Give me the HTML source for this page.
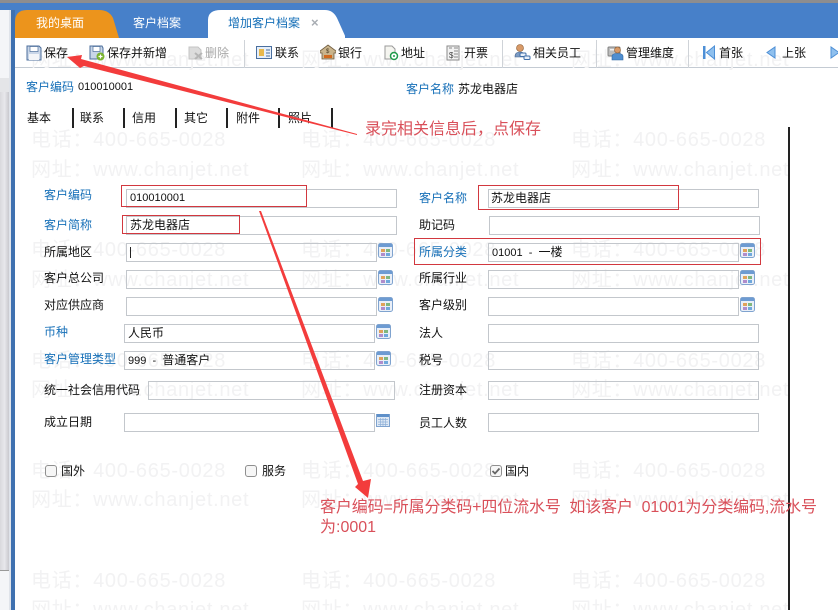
<!DOCTYPE html>
<html><head><meta charset="utf-8"><style>
html,body{margin:0;padding:0;background:#fff}
#p{position:relative;width:838px;height:610px;overflow:hidden;background:#fff;font:12px/16px "Liberation Sans","Noto Sans CJK SC",sans-serif;color:#111}
#p div,#p span.a,#p svg.a{position:absolute}
.t{white-space:nowrap}
.b{color:#1770b8}
.i{border:1px solid #c3c7cc;box-sizing:border-box;height:19px;background:transparent}
.w{color:#f2f2f3;font-size:20px;line-height:24px;white-space:nowrap;letter-spacing:.7px}
.s{width:1px;height:28px;top:40px;background:#cfd3d8}
.sep{width:2px;height:20px;top:108px;background:#222}
.r{border:1px solid #d2383f;box-sizing:border-box}
.c{width:12px;height:12px;border:1px solid #8f8f8f;border-radius:3px;box-sizing:border-box;background:#f6f6f6}
.n{color:#d9505a;font-size:16px;line-height:20px;white-space:nowrap}
</style></head><body><div id="p">

<div class="w" style="left:31px;top:18px">电话：400-665-0028</div><div class="w" style="left:301px;top:18px">电话：400-665-0028</div><div class="w" style="left:571px;top:18px">电话：400-665-0028</div>
<div style="left:0;top:0;width:838px;height:3px;background:#8d8d8f"></div>
<div style="left:0;top:3px;width:838px;height:35px;background:#4780c9"></div>
<div style="left:0;top:10px;width:11px;height:600px;background:#f4f5f8"></div>
<div style="left:0;top:78px;width:9px;height:14px;background:#e4e5e8"></div>
<div style="left:0;top:92px;width:9px;height:478px;background:linear-gradient(90deg,#d8d8dc,#e8e8ec,#c9c9ce)"></div>
<div style="left:0;top:570px;width:9px;height:1px;background:#999"></div>
<div style="left:9px;top:10px;width:2px;height:600px;background:#dfe3ea"></div>
<div style="left:11px;top:10px;width:4px;height:600px;background:#3f71b0"></div>

<svg class="a" style="left:15px;top:10px" width="330" height="28"><path d="M0 28V12Q0 0 12 0H84Q94 0 98 8L104 28Z" fill="#ec941c"/><path d="M193 28Q193 28 193 10Q193 0 206 0H310Q318 0 322 8L331 28Z" fill="#fff"/></svg>
<div class="t" style="left:36px;top:14px;color:#fff;line-height:18px">我的桌面</div>
<div class="t" style="left:133px;top:14px;color:#fff;line-height:18px">客户档案</div>
<div class="t b" style="left:228px;top:14px;line-height:18px">增加客户档案</div>
<div class="t" style="left:311px;top:14px;color:#a8adb3;font-size:13px;line-height:18px;font-weight:bold">×</div>

<div style="left:15px;top:38px;width:823px;height:30px;background:#fff;border-bottom:1px solid #c4cbd3;box-sizing:border-box"></div>
<div class="w" style="left:31px;top:48px">网址：www.chanjet.net</div><div class="w" style="left:301px;top:48px">网址：www.chanjet.net</div><div class="w" style="left:571px;top:48px">网址：www.chanjet.net</div>
<div class="w" style="left:31px;top:128px">电话：400-665-0028</div><div class="w" style="left:301px;top:128px">电话：400-665-0028</div><div class="w" style="left:571px;top:128px">电话：400-665-0028</div>
<div class="w" style="left:31px;top:158px">网址：www.chanjet.net</div><div class="w" style="left:301px;top:158px">网址：www.chanjet.net</div><div class="w" style="left:571px;top:158px">网址：www.chanjet.net</div>
<div class="w" style="left:31px;top:238px">电话：400-665-0028</div><div class="w" style="left:301px;top:238px">电话：400-665-0028</div><div class="w" style="left:571px;top:238px">电话：400-665-0028</div>
<div class="w" style="left:31px;top:268px">网址：www.chanjet.net</div><div class="w" style="left:301px;top:268px">网址：www.chanjet.net</div><div class="w" style="left:571px;top:268px">网址：www.chanjet.net</div>
<div class="w" style="left:31px;top:349px">电话：400-665-0028</div><div class="w" style="left:301px;top:349px">电话：400-665-0028</div><div class="w" style="left:571px;top:349px">电话：400-665-0028</div>
<div class="w" style="left:31px;top:378px">网址：www.chanjet.net</div><div class="w" style="left:301px;top:378px">网址：www.chanjet.net</div><div class="w" style="left:571px;top:378px">网址：www.chanjet.net</div>
<div class="w" style="left:31px;top:459px">电话：400-665-0028</div><div class="w" style="left:301px;top:459px">电话：400-665-0028</div><div class="w" style="left:571px;top:459px">电话：400-665-0028</div>
<div class="w" style="left:31px;top:488px">网址：www.chanjet.net</div><div class="w" style="left:301px;top:488px">网址：www.chanjet.net</div><div class="w" style="left:571px;top:488px">网址：www.chanjet.net</div>
<div class="w" style="left:31px;top:569px">电话：400-665-0028</div><div class="w" style="left:301px;top:569px">电话：400-665-0028</div><div class="w" style="left:571px;top:569px">电话：400-665-0028</div>
<div class="w" style="left:31px;top:598px">网址：www.chanjet.net</div><div class="w" style="left:301px;top:598px">网址：www.chanjet.net</div><div class="w" style="left:571px;top:598px">网址：www.chanjet.net</div>

<!-- toolbar icons -->
<svg class="a" style="left:26px;top:45px" width="16" height="16"><path d="M1 1H13L15 3V15H1Z" fill="#c9d6e8" stroke="#4d6f9c"/><rect x="4" y="1.5" width="8" height="5" fill="#fff" stroke="#4d6f9c" stroke-width=".7"/><rect x="3" y="9" width="10" height="6" fill="#f3f5f8"/></svg>
<svg class="a" style="left:89px;top:45px" width="16" height="16"><path d="M1 1H13L14 3V14H1Z" fill="#c9d6e8" stroke="#4d6f9c"/><rect x="4" y="1.5" width="7" height="5" fill="#fff" stroke="#4d6f9c" stroke-width=".7"/><circle cx="11.5" cy="11.5" r="4" fill="#7ab32f"/><path d="M11.5 9.5v4M9.500 11.5h4" stroke="#fff" stroke-width="1.200"/></svg>
<svg class="a" style="left:188px;top:45px" width="16" height="16"><path d="M1 2H10L13 5V14H1Z" fill="#dcdcdc" stroke="#c4c4c4"/><path d="M7 8L14 14M14 8L7 14" stroke="#b5b5b5" stroke-width="2"/></svg>
<svg class="a" style="left:256px;top:45px" width="16" height="15"><rect x=".5" y="1.500" width="15" height="12" fill="#e6effa" stroke="#4a6f9f"/><rect x="3" y="4" width="5" height="7" fill="#e8b84c"/><path d="M10 5h4M10 8h4M10 11h4" stroke="#4a6f9f"/></svg>
<svg class="a" style="left:320px;top:44px" width="16" height="16"><path d="M0 7L8 1L16 7V9H14V15H2V9H0Z" fill="#c9b48c" stroke="#6e5a3c" stroke-width=".8"/><rect x="4" y="11" width="8" height="3" fill="#d2691e"/><text x="6" y="9" font-size="6" font-family="Liberation Sans" fill="#4a3a20">$</text></svg>
<svg class="a" style="left:383px;top:45px" width="16" height="16"><path d="M2 1H9L12 4V14H2Z" fill="#f5f5f0" stroke="#9a9a9a"/><circle cx="11" cy="11" r="3.500" fill="#fff" stroke="#1f9a4a" stroke-width="1.500"/><circle cx="11" cy="11" r="1" fill="#1f9a4a"/></svg>
<svg class="a" style="left:446px;top:45px" width="15" height="16"><path d="M1 1H13V15H1Z" fill="#f2f2f2" stroke="#8a8a8a"/><path d="M8 3h4M8 6h4M3 3h3" stroke="#8a8a8a"/><text x="3" y="13" font-size="8" font-family="Liberation Sans" fill="#444">$</text><path d="M8 9h4M8 12h4" stroke="#8a8a8a"/></svg>
<svg class="a" style="left:514px;top:44px" width="17" height="17"><circle cx="6" cy="4" r="3.500" fill="#d89a68" stroke="#8a5a30" stroke-width=".6"/><path d="M1 13Q1 8 6 8Q11 8 11 13Z" fill="#7d9cc4" stroke="#46648e" stroke-width=".6"/><rect x="6" y="9" width="6" height="3.500" rx="1" fill="#e8f0fa" stroke="#3f6ea8"/><rect x="10" y="12" width="6" height="3.500" rx="1" fill="#e8f0fa" stroke="#3f6ea8"/></svg>
<svg class="a" style="left:607px;top:45px" width="17" height="16"><rect x="1" y="2" width="12" height="9" rx="1" fill="#bdbdbd" stroke="#808080"/><rect x="3" y="4" width="8" height="1.500" fill="#f0f0f0"/><circle cx="10.500" cy="5" r="3" fill="#d89a68" stroke="#8a5a30" stroke-width=".6"/><path d="M5 15V11Q5 8.500 10.500 8.500Q16 8.500 16 11V15Z" fill="#4f8ed0" stroke="#2f64a0" stroke-width=".6"/></svg>
<svg class="a" style="left:703px;top:45px" width="12" height="15"><rect x="0" y="1" width="2.500" height="13" fill="#4d8fd6"/><path d="M11.500 1V14L3.500 7.500Z" fill="#8fc0ee" stroke="#4d8fd6"/></svg>
<svg class="a" style="left:766px;top:45px" width="10" height="15"><path d="M9 2V13L1 7.500Z" fill="#8fc0ee" stroke="#4d8fd6"/></svg>
<svg class="a" style="left:830px;top:45px" width="8" height="15"><path d="M1 2V13L9 7.500Z" fill="#8fc0ee" stroke="#4d8fd6"/></svg>

<div class="t" style="left:44px;top:45px">保存</div>
<div class="t" style="left:107px;top:45px">保存并新增</div>
<div class="t" style="left:205px;top:45px;color:#a9a9a9">删除</div>
<div class="t" style="left:275px;top:45px">联系</div>
<div class="t" style="left:338px;top:45px">银行</div>
<div class="t" style="left:401px;top:45px">地址</div>
<div class="t" style="left:464px;top:45px">开票</div>
<div class="t" style="left:533px;top:45px">相关员工</div>
<div class="t" style="left:626px;top:45px">管理维度</div>
<div class="t" style="left:719px;top:45px">首张</div>
<div class="t" style="left:782px;top:45px">上张</div>
<div class="s" style="left:244px"></div><div class="s" style="left:502px"></div><div class="s" style="left:596px"></div><div class="s" style="left:688px"></div>

<!-- header row -->
<div class="t b" style="left:26px;top:79px">客户编码</div><div class="t" style="left:78px;top:79px;font-size:11px">010010001</div>
<div class="t b" style="left:406px;top:81px">客户名称</div><div class="t" style="left:458px;top:81px">苏龙电器店</div>

<!-- inner tabs -->
<div class="t" style="left:27px;top:110px">基本</div><div class="t" style="left:80px;top:110px">联系</div><div class="t" style="left:132px;top:110px">信用</div><div class="t" style="left:184px;top:110px">其它</div><div class="t" style="left:236px;top:110px">附件</div><div class="t" style="left:288px;top:110px">照片</div>
<div class="sep" style="left:72px"></div><div class="sep" style="left:123px"></div><div class="sep" style="left:175px"></div><div class="sep" style="left:226px"></div><div class="sep" style="left:278px"></div><div class="sep" style="left:331px"></div>

<!-- left column -->
<div class="t b" style="left:44px;top:187px">客户编码</div><div class="i" style="left:126px;top:189px;width:271px"></div>
<div class="t" style="left:130px;top:190px;font-size:11px">010010001</div>
<div class="t b" style="left:44px;top:217px">客户简称</div><div class="i" style="left:126px;top:216px;width:271px"></div>
<div class="t" style="left:130px;top:217px">苏龙电器店</div>
<div class="t" style="left:44px;top:244px">所属地区</div><div class="i" style="left:126px;top:243px;width:251px"></div><div style="left:130px;top:247px;width:1px;height:11px;background:#222"></div>
<div class="t" style="left:44px;top:270px">客户总公司</div><div class="i" style="left:126px;top:270px;width:251px"></div>
<div class="t" style="left:44px;top:297px">对应供应商</div><div class="i" style="left:126px;top:297px;width:251px"></div>
<div class="t b" style="left:44px;top:324px">币种</div><div class="i" style="left:124px;top:324px;width:251px"></div>
<div class="t" style="left:128px;top:325px">人民币</div>
<div class="t b" style="left:44px;top:351px">客户管理类型</div><div class="i" style="left:124px;top:351px;width:251px"></div>
<div class="t" style="left:128px;top:352px;font-size:11px">999 &nbsp;-&nbsp; <span style="font-size:12px">普通客户</span></div>
<div class="t" style="left:44px;top:382px">统一社会信用代码</div><div class="i" style="left:148px;top:381px;width:247px"></div>
<div class="t" style="left:44px;top:414px">成立日期</div><div class="i" style="left:124px;top:413px;width:251px"></div>

<!-- right column -->
<div class="t b" style="left:419px;top:190px">客户名称</div><div class="i" style="left:488px;top:189px;width:271px"></div>
<div class="t" style="left:491px;top:190px">苏龙电器店</div>
<div class="t" style="left:419px;top:217px">助记码</div><div class="i" style="left:489px;top:216px;width:271px"></div>
<div class="t b" style="left:419px;top:244px">所属分类</div><div class="i" style="left:488px;top:243px;width:251px"></div>
<div class="t" style="left:492px;top:244px;font-size:11px">01001 &nbsp;-&nbsp; <span style="font-size:12px">一楼</span></div>
<div class="t" style="left:419px;top:270px">所属行业</div><div class="i" style="left:488px;top:270px;width:251px"></div>
<div class="t" style="left:419px;top:297px">客户级别</div><div class="i" style="left:488px;top:297px;width:251px"></div>
<div class="t" style="left:419px;top:325px">法人</div><div class="i" style="left:488px;top:324px;width:271px"></div>
<div class="t" style="left:419px;top:352px">税号</div><div class="i" style="left:488px;top:351px;width:271px"></div>
<div class="t" style="left:419px;top:382px">注册资本</div><div class="i" style="left:488px;top:381px;width:271px"></div>
<div class="t" style="left:419px;top:415px">员工人数</div><div class="i" style="left:488px;top:413px;width:271px"></div>

<!-- lookup icons -->
<svg class="a" style="left:378px;top:243px" width="15" height="15"><rect x=".5" y=".5" width="14" height="14" rx="2" fill="#e9eff8" stroke="#7fa3cf"/><rect x="1" y="1" width="13" height="3" fill="#6d9bd2"/><rect x="3" y="6" width="4" height="3" fill="#e0a25a"/><rect x="8" y="6" width="4" height="3" fill="#7fb77e"/><rect x="3" y="10" width="4" height="3" fill="#b08ccb"/><rect x="8" y="10" width="4" height="3" fill="#6fa8dc"/></svg>
<svg class="a" style="left:378px;top:270px" width="15" height="15"><rect x=".5" y=".5" width="14" height="14" rx="2" fill="#e9eff8" stroke="#7fa3cf"/><rect x="1" y="1" width="13" height="3" fill="#6d9bd2"/><rect x="3" y="6" width="4" height="3" fill="#e0a25a"/><rect x="8" y="6" width="4" height="3" fill="#7fb77e"/><rect x="3" y="10" width="4" height="3" fill="#b08ccb"/><rect x="8" y="10" width="4" height="3" fill="#6fa8dc"/></svg>
<svg class="a" style="left:378px;top:297px" width="15" height="15"><rect x=".5" y=".5" width="14" height="14" rx="2" fill="#e9eff8" stroke="#7fa3cf"/><rect x="1" y="1" width="13" height="3" fill="#6d9bd2"/><rect x="3" y="6" width="4" height="3" fill="#e0a25a"/><rect x="8" y="6" width="4" height="3" fill="#7fb77e"/><rect x="3" y="10" width="4" height="3" fill="#b08ccb"/><rect x="8" y="10" width="4" height="3" fill="#6fa8dc"/></svg>
<svg class="a" style="left:376px;top:324px" width="15" height="15"><rect x=".5" y=".5" width="14" height="14" rx="2" fill="#e9eff8" stroke="#7fa3cf"/><rect x="1" y="1" width="13" height="3" fill="#6d9bd2"/><rect x="3" y="6" width="4" height="3" fill="#e0a25a"/><rect x="8" y="6" width="4" height="3" fill="#7fb77e"/><rect x="3" y="10" width="4" height="3" fill="#b08ccb"/><rect x="8" y="10" width="4" height="3" fill="#6fa8dc"/></svg>
<svg class="a" style="left:376px;top:351px" width="15" height="15"><rect x=".5" y=".5" width="14" height="14" rx="2" fill="#e9eff8" stroke="#7fa3cf"/><rect x="1" y="1" width="13" height="3" fill="#6d9bd2"/><rect x="3" y="6" width="4" height="3" fill="#e0a25a"/><rect x="8" y="6" width="4" height="3" fill="#7fb77e"/><rect x="3" y="10" width="4" height="3" fill="#b08ccb"/><rect x="8" y="10" width="4" height="3" fill="#6fa8dc"/></svg>
<svg class="a" style="left:740px;top:243px" width="15" height="15"><rect x=".5" y=".5" width="14" height="14" rx="2" fill="#e9eff8" stroke="#7fa3cf"/><rect x="1" y="1" width="13" height="3" fill="#6d9bd2"/><rect x="3" y="6" width="4" height="3" fill="#e0a25a"/><rect x="8" y="6" width="4" height="3" fill="#7fb77e"/><rect x="3" y="10" width="4" height="3" fill="#b08ccb"/><rect x="8" y="10" width="4" height="3" fill="#6fa8dc"/></svg>
<svg class="a" style="left:740px;top:270px" width="15" height="15"><rect x=".5" y=".5" width="14" height="14" rx="2" fill="#e9eff8" stroke="#7fa3cf"/><rect x="1" y="1" width="13" height="3" fill="#6d9bd2"/><rect x="3" y="6" width="4" height="3" fill="#e0a25a"/><rect x="8" y="6" width="4" height="3" fill="#7fb77e"/><rect x="3" y="10" width="4" height="3" fill="#b08ccb"/><rect x="8" y="10" width="4" height="3" fill="#6fa8dc"/></svg>
<svg class="a" style="left:740px;top:297px" width="15" height="15"><rect x=".5" y=".5" width="14" height="14" rx="2" fill="#e9eff8" stroke="#7fa3cf"/><rect x="1" y="1" width="13" height="3" fill="#6d9bd2"/><rect x="3" y="6" width="4" height="3" fill="#e0a25a"/><rect x="8" y="6" width="4" height="3" fill="#7fb77e"/><rect x="3" y="10" width="4" height="3" fill="#b08ccb"/><rect x="8" y="10" width="4" height="3" fill="#6fa8dc"/></svg>
<svg class="a" style="left:376px;top:413px" width="14" height="14"><rect x=".5" y="1.500" width="13" height="12" fill="#dfe9f5" stroke="#7fa3cf"/><rect x="1" y="1" width="12" height="3" fill="#5f90c9"/><path d="M2 6.500h10M2 9h10M2 11.500h10M4.500 5v8M7 5v8M9.500 5v8" stroke="#8fb0d8" stroke-width=".7"/></svg>

<!-- checkboxes -->
<div class="c" style="left:45px;top:465px"></div><div class="t" style="left:61px;top:463px">国外</div>
<div class="c" style="left:245px;top:465px"></div><div class="t" style="left:262px;top:463px">服务</div>
<div class="c" style="left:490px;top:465px"></div><svg class="a" style="left:490px;top:465px" width="12" height="12"><path d="M2.500 6L5 8.500L9.500 3.500" fill="none" stroke="#666" stroke-width="1.800"/></svg><div class="t" style="left:505px;top:463px">国内</div>

<!-- red boxes -->
<div class="r" style="left:121px;top:185px;width:186px;height:22px"></div>
<div class="r" style="left:122px;top:215px;width:118px;height:19px"></div>
<div class="r" style="left:478px;top:185px;width:201px;height:25px"></div>
<div class="r" style="left:414px;top:238px;width:347px;height:27px"></div>

<div style="left:788px;top:127px;width:2px;height:483px;background:#222"></div>

<!-- arrows -->
<svg class="a" style="left:0;top:0" width="838" height="610">
<path d="M67 57L82 55L81 59L357 134L357 135L84 66L80 68Z" fill="#f33c3c"/>
<path d="M259 211L261 211L363 481L371 479L368 498L355 487L358 484Z" fill="#f33c3c"/>
</svg>

<div class="n" style="left:365px;top:120px">录完相关信息后，点保存</div>
<div class="n" style="left:320px;top:498px;letter-spacing:-.12px">客户编码=所属分类码+四位流水号&nbsp; 如该客户&nbsp; 01001为分类编码,流水号</div>
<div class="n" style="left:320px;top:518px">为:0001</div>
</div></body></html>
